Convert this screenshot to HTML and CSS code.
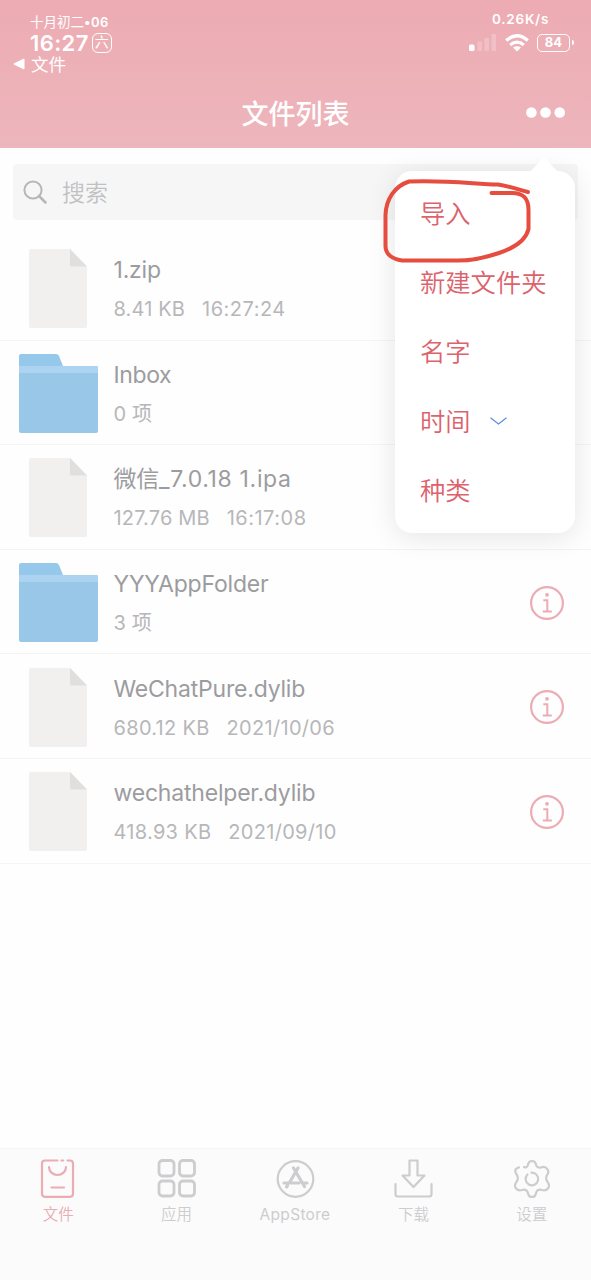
FILE: index.html
```html
<!DOCTYPE html>
<html lang="zh-CN">
<head>
<meta charset="utf-8">
<meta name="viewport" content="width=device-width, initial-scale=1">
<title>文件列表</title>
<link rel="stylesheet" href="styles.css">
</head>
<body>
<svg width="0" height="0" class="defs" aria-hidden="true">
  <symbol id="file" viewBox="0 0 58 79"><path d="M2 0H41L58 17.500V77Q58 79 56 79H2Q0 79 0 77V2Q0 0 2 0Z" fill="#f1f0ef"/><path d="M41 0L58 17.500H42.500Q41 17.500 41 16Z" fill="#e0dfdd"/></symbol>
  <symbol id="folder" viewBox="0 0 79 79"><path d="M2 0H37Q39 0 40 2L44 12H77Q79 12 79 14V30H0V2Q0 0 2 0Z" fill="#95c8ea"/><path d="M0 12H77Q79 12 79 14V24H0Z" fill="#acd3ef"/><path d="M0 19H79V77Q79 79 77 79H2Q0 79 0 77Z" fill="#98c7e8"/></symbol>
  <symbol id="info" viewBox="0 0 34 34"><g fill="none" stroke="#ebacb4" stroke-width="2.200"><circle cx="17" cy="17" r="15.900"/><path d="M13.300 14.200H17.300V25.500M12.800 25.500H21.800" stroke-width="2"/></g><circle cx="17" cy="8.800" r="1.900" fill="#ebacb4"/></symbol>
</svg>
<header class="header">
  <div class="status">
    <div class="status-left">
      <div class="lunar">十月初二<b>•06</b></div>
      <div class="clock"><b>16:27</b><span class="day">六</span></div>
      <div class="back"><svg width="12" height="12" viewBox="0 0 12 12"><path d="M.8 6L11 1V11Z" fill="#fff" stroke="#fff" stroke-linejoin="round"/></svg><span>文件</span></div>
    </div>
    <div class="status-right">
      <div class="speed">0.26K/s</div>
      <div class="signals">
        <svg width="28" height="19" viewBox="0 0 28 19" fill="#fff"><rect x="0" y="11.500" width="5.500" height="6.500" rx="1.500"/><g opacity=".22"><rect x="8.500" y="8.500" width="4.500" height="9.500" rx="1"/><rect x="15.500" y="5" width="4.500" height="13" rx="1"/><rect x="22.500" y="1" width="4.500" height="17" rx="1"/></g></svg>
        <svg width="24" height="18" viewBox="0 0 24 18" fill="none" stroke="#fff" stroke-width="3.200"><path d="M1.200 6.500Q12-3 22.800 6.500M5.200 11Q12 5.400 18.800 11"/><path d="M8 13.600Q12 10.800 16 13.600L12 17.500Z" fill="#fff" stroke="none"/></svg>
        <div class="battery"><span>84</span></div>
      </div>
    </div>
  </div>
  <div class="navbar"><h1>文件列表</h1><svg class="more" width="39" height="11" viewBox="0 0 39 11" fill="#fff"><circle cx="5.400" cy="5.500" r="5.300"/><circle cx="19.500" cy="5.500" r="5.300"/><circle cx="33.700" cy="5.500" r="5.300"/></svg></div>
</header>
<main class="content">
  <div class="search">
    <svg width="24" height="24" viewBox="0 0 24 24" fill="none" stroke="#b7b7b9" stroke-width="2"><circle cx="10" cy="10" r="8.600"/><path d="M16 16L22.500 22.500" stroke-width="2.500" stroke-linecap="round"/></svg>
    <span>搜索</span>
  </div>
  <ul class="list">
    <li class="row"><div class="thumb"><svg width="58" height="79"><use href="#file"/></svg></div><div class="meta"><div class="name n1">1.zip</div><div class="sub"><span>8.41 KB</span><span class="time">16:27:24</span></div></div></li>
    <li class="row"><div class="thumb"><svg width="79" height="79"><use href="#folder"/></svg></div><div class="meta"><div class="name n2">Inbox</div><div class="sub"><span>0 项</span></div></div></li>
    <li class="row"><div class="thumb"><svg width="58" height="79"><use href="#file"/></svg></div><div class="meta"><div class="name n3">微信<span class="version">_7.0.18 1.ipa</span></div><div class="sub"><span>127.76 MB</span><span class="time">16:17:08</span></div></div></li>
    <li class="row"><div class="thumb"><svg width="79" height="79"><use href="#folder"/></svg></div><div class="meta"><div class="name n4">YYYAppFolder</div><div class="sub"><span>3 项</span></div></div><svg class="info" width="34" height="34"><use href="#info"/></svg></li>
    <li class="row"><div class="thumb"><svg width="58" height="79"><use href="#file"/></svg></div><div class="meta"><div class="name n5">WeChatPure.dylib</div><div class="sub wide"><span>680.12 KB</span><span>2021/10/06</span></div></div><svg class="info" width="34" height="34"><use href="#info"/></svg></li>
    <li class="row"><div class="thumb"><svg width="58" height="79"><use href="#file"/></svg></div><div class="meta"><div class="name n6">wechathelper.dylib</div><div class="sub wide"><span>418.93 KB</span><span>2021/09/10</span></div></div><svg class="info" width="34" height="34"><use href="#info"/></svg></li>
  </ul>
</main>
<nav class="tabs">
  <div class="tab active"><svg width="40" height="40" viewBox="0 0 40 40"><path d="M19.500 1.500H7Q4 1.500 4 4.500V34.500Q4 37.800 7 37.800H32Q35 37.800 35 34.500V4.500Q35 1.500 32 1.500H29.500M23.500 1.500H25.200"/><path d="M11 8A8.500 8 0 0 0 28 8M13.500 28.500H26"/></svg><span>文件</span></div>
  <div class="tab"><svg class="bold" width="40" height="40" viewBox="0 0 40 40"><rect x="2" y="1.500" width="15" height="15.500" rx="3.500"/><rect x="22.500" y="1.500" width="15" height="15.500" rx="3.500"/><rect x="2" y="22" width="15" height="15" rx="3.500"/><rect x="22.500" y="22" width="15" height="15" rx="3.500"/></svg><span>应用</span></div>
  <div class="tab"><svg width="40" height="40" viewBox="0 0 40 40"><circle cx="20.500" cy="20" r="17.800"/><path class="strut" d="M18.500 9L29.500 27.500M23 9L14.500 23.500M9 24H24M27.500 24H32M11.500 28L12.500 26.500"/></svg><span class="latin">AppStore</span></div>
  <div class="tab"><svg width="40" height="40" viewBox="0 0 40 40"><path d="M16.500 1.500H24.500V16.500H31.500L20.500 28L9.500 16.500H16.500ZM2.500 25V35Q2.500 37.500 4.500 37.500H36.500Q38.500 37.500 38.500 35V25"/></svg><span>下载</span></div>
  <div class="tab"><svg width="40" height="40" viewBox="0 0 40 40"><path d="M12 8C14 9 15.500 8 16 5.500Q16.800 2 20 2T24 5.500C24.500 8.500 27 9 29 8.500Q32.500 7 34.800 9.500T36 14.500C33.500 17.500 33.500 20.500 36 23.500Q38 27 36 29.500T30 31C27 30 25 31 24 34Q23.500 38 20 38T16 34C15 31 13 30 10 31Q6 32 4 29.500T4 23.500C6.500 20.500 6.500 17.500 4 14.500Q2.500 11.500 4 10T7 8.300"/><path d="M15.500 15.500A6.300 6.300 0 1 0 19.500 13.700"/></svg><span>设置</span></div>
</nav>
<div class="popover">
  <svg class="arrow" width="32" height="15" viewBox="0 0 32 15"><path d="M0 15Q3 14 6 11L14 2Q16 0 18 2L26 11Q29 14 32 15Z" fill="#fff"/></svg>
  <div class="item">导入</div>
  <div class="item">新建文件夹</div>
  <div class="item">名字</div>
  <div class="item">时间<svg width="17" height="8" viewBox="0 0 17 8" fill="none" stroke="#5a8ee0" stroke-width="1.200"><path d="M.5.8L8.500 7L16.500.8"/></svg></div>
  <div class="item">种类</div>
</div>
<svg class="mark" width="160" height="100" viewBox="380 170 160 100" fill="none" stroke="#e54d3f" stroke-width="4" stroke-linecap="round" stroke-linejoin="round"><path d="M491.500 193H512C524 193 528.500 199 528.500 210V229C526 240 514 248 499 253C484 258 472 260.500 458 260.500H402C392 259 385.500 254 385.500 246V215C386 199 395 186 409 181.500C447 180 475 184 498 184.500C508 186 517 189 528 192"/></svg>
</body>
</html>
```

FILE: styles.css
```css
* { box-sizing: border-box; }
body { margin: 0; height: 1280px; overflow: hidden; position: relative; display: flex; flex-direction: column; background: #fefefe; font-family: Inter, "Noto Sans CJK SC", sans-serif; }
.defs { position: absolute; }
.header { height: 148px; background: linear-gradient(#edabb3, #edb6bc); color: #fff; display: flex; flex-direction: column; }
.status { height: 78px; display: flex; justify-content: space-between; }
.status-left { padding: 13px 0 0 13px; display: flex; flex-direction: column; }
.lunar { font-size: 13.500px; line-height: 18px; padding-left: 17px; }
.lunar b { font-weight: 600; font-size: 13px; letter-spacing: .5px; }
.clock { display: flex; align-items: center; gap: 3px; height: 24px; padding-left: 17px; line-height: 22px; }
.clock b { font-size: 22px; font-weight: 600; letter-spacing: .4px; }
.day { width: 20px; height: 20px; border: 1.500px solid #fff; border-radius: 6px; font-size: 14px; line-height: 16px; text-align: center; }
.back { display: flex; align-items: center; gap: 6px; height: 17px; font-size: 17.500px; line-height: 17px; padding-top: 1px; }
.status-right { padding: 11px 21px 0 0; display: flex; flex-direction: column; }
.speed { font-size: 13.500px; line-height: 16px; font-weight: 600; letter-spacing: .75px; padding-left: 23px; }
.signals { display: flex; align-items: center; height: 31px; gap: 8px; }
.battery { width: 33px; height: 18px; border: 1.500px solid #fff; border-radius: 5px; font-size: 13px; font-weight: 700; line-height: 15px; text-align: center; position: relative; }
.battery::after { content: ""; position: absolute; right: -5px; top: 5px; width: 2px; height: 5px; background: #fff; border-radius: 0 2px 2px 0; }
.navbar { height: 70px; display: grid; grid-template-columns: 1fr auto 1fr; align-items: center; padding: 0 26px; }
h1 { margin: 0; grid-column: 2; font-size: 27px; line-height: 40px; font-weight: 500; padding-top: 4px; }
.more { justify-self: end; margin-bottom: 2px; }
.content { flex: 1; padding-top: 16px; }
.search { margin: 0 13px; height: 56px; background: #f6f6f7; border-radius: 4px; display: flex; align-items: center; gap: 15px; padding-left: 10px; color: #c1c1c3; font-size: 23px; font-weight: 350; }
.search span { padding-bottom: 2px; }
.list { list-style: none; margin: 16px 0 0; padding: 0; }
.row { height: 104.600px; border-bottom: 1px solid #f4f4f4; display: flex; align-items: center; padding: 2px 27px 0 18px; }
.thumb { width: 80px; display: flex; justify-content: center; }
.meta { flex: 1; padding-left: 15.500px; padding-bottom: 1px; }
.name { font-size: 23px; line-height: 34px; color: #9c9c9f; white-space: nowrap; letter-spacing: -.2px; }
.n2 { letter-spacing: -.4px; }
.version { letter-spacing: .65px; }
.sub { display: flex; gap: 17px; margin-top: 8px; font-size: 20px; line-height: 28px; color: #b7b7ba; white-space: nowrap; letter-spacing: .15px; }
.time { letter-spacing: .5px; }
.wide { letter-spacing: .3px; }
.tabs { height: 132px; background: #fbfbfb; border-top: 1px solid #f5f5f5; display: grid; grid-template-columns: repeat(5, 1fr); padding-top: 10px; margin-left: -1px; color: #cdcdd0; }
.tab { display: flex; flex-direction: column; align-items: center; gap: 4px; font-size: 15.500px; line-height: 24px; font-weight: 350; }
.tab svg { fill: none; stroke: currentColor; stroke-width: 2.200; stroke-linecap: round; stroke-linejoin: round; }
.tab .bold { stroke-width: 2.800; }
.tab .strut { stroke-width: 3.200; }
.latin { letter-spacing: .3px; font-weight: 400; }
.tab.active { color: #ebacb4; }
.popover { position: absolute; left: 395px; top: 171px; width: 180px; height: 362px; background: #fff; border-radius: 17px; box-shadow: 0 4px 28px rgba(0,0,0,.1); padding: 6px 0 0 25px; color: #dc626c; }
.arrow { position: absolute; left: 133px; top: -14px; }
.item { height: 69.300px; display: flex; align-items: center; font-size: 25.300px; font-weight: 350; white-space: nowrap; }
.item svg { margin: 2px 0 0 19px; }
.mark { position: absolute; left: 380px; top: 170px; }
```
